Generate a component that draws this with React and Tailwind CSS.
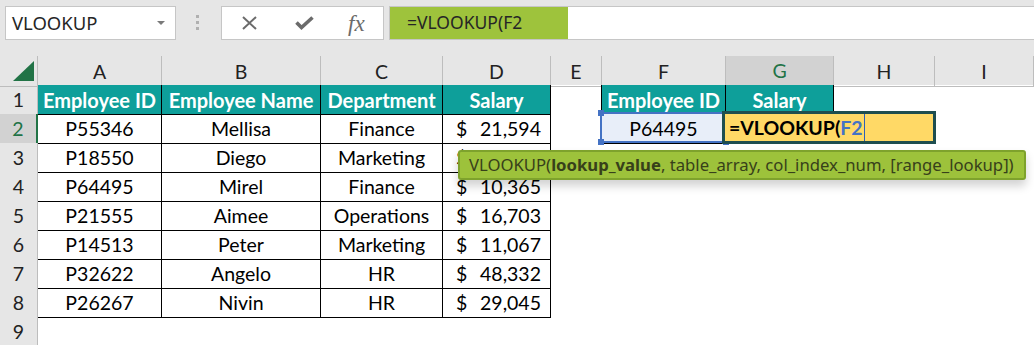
import React from "react";

const COLW = "grid grid-cols-[38px_124px_159px_122px_108px_51px_124px_108px_101px_99px]";
const LETTERS = ["A", "B", "C", "D", "E", "F", "G", "H", "I"];

const DATA = [
  ["P55346", "Mellisa", "Finance", "21,594"],
  ["P18550", "Diego", "Marketing", "34,210"],
  ["P64495", "Mirel", "Finance", "10,365"],
  ["P21555", "Aimee", "Operations", "16,703"],
  ["P14513", "Peter", "Marketing", "11,067"],
  ["P32622", "Angelo", "HR", "48,332"],
  ["P26267", "Nivin", "HR", "29,045"],
];

const inT = (r, c) =>
  (r >= 1 && r <= 8 && c >= 1 && c <= 4) || (r >= 1 && r <= 2 && (c === 6 || c === 7));

const CELL_FONT = { fontFamily: "Lato, 'Liberation Sans', sans-serif" };
const UI_FONT = { fontFamily: "'Noto Sans', 'Open Sans', sans-serif" };

function Cell({ r, c }) {
  const rightBlack = inT(r, c) || inT(r, c + 1);
  const bottomBlack = inT(r, c) || inT(r + 1, c);
  const teal = r === 1 && inT(r, c);
  let content = null;
  if (r === 1) {
    const heads = { 1: "Employee ID", 2: "Employee Name", 3: "Department", 4: "Salary", 6: "Employee ID", 7: "Salary" };
    content = heads[c] || null;
  } else if (r >= 2 && r <= 8 && c >= 1 && c <= 4) {
    const row = DATA[r - 2];
    if (c === 4) {
      return (
        <div
          className={`flex items-center justify-between pl-[13px] pr-[9px] border-r border-b text-[19.5px] text-black ${
            rightBlack ? "border-r-black" : "border-r-transparent"
          } ${bottomBlack ? "border-b-black" : "border-b-transparent"}`}
        >
          <span>$</span>
          <span>{row[3]}</span>
        </div>
      );
    }
    content = row[c - 1];
  } else if (r === 2 && c === 6) {
    content = "P64495";
  }
  const f2 = r === 2 && c === 6;
  return (
    <div
      className={`flex items-center justify-center border-r border-b whitespace-nowrap overflow-hidden ${
        rightBlack ? "border-r-black" : "border-r-transparent"
      } ${bottomBlack ? "border-b-black" : "border-b-transparent"} ${
        teal ? "bg-[#0e9f9a] text-white font-bold text-[20px]" : "text-black text-[19.5px]"
      } ${f2 ? "bg-[#e8eef9]" : ""}`}
    >
      {content}
    </div>
  );
}

export default function App() {
  return (
    <div className="relative w-[1034px] h-[345px] overflow-hidden bg-white" style={CELL_FONT}>
      {/* Toolbar */}
      <div className="h-[56px] bg-[#e6e6e6] flex items-start pt-[6px]">
        <div
          className="ml-[5px] w-[171px] h-[34px] bg-white border border-[#c6c6c6] flex items-center justify-between pl-[6px] pr-[10px]"
          style={UI_FONT}
        >
          <span className="text-[18.5px] text-[#262626] leading-none">VLOOKUP</span>
          <svg width="8" height="5" viewBox="0 0 8 5">
            <path d="M0 0 L8 0 L4 4 Z" fill="#7a7a7a" />
          </svg>
        </div>
        <div className="ml-[20px] mt-[9px] flex flex-col gap-[3px]">
          <div className="w-[3px] h-[3px] bg-[#b0b0b0]" />
          <div className="w-[3px] h-[3px] bg-[#b0b0b0]" />
          <div className="w-[3px] h-[3px] bg-[#b0b0b0]" />
        </div>
        <div className="ml-[22px] w-[163px] h-[34px] bg-white border border-[#c6c6c6] flex items-center">
          <svg className="ml-[19px]" width="17" height="14" viewBox="0 0 17 14">
            <path d="M2 1 L15 13 M15 1 L2 13" stroke="#6b6b6b" strokeWidth="2" />
          </svg>
          <svg className="ml-[37px]" width="19" height="14" viewBox="0 0 19 14">
            <path d="M1.5 6.5 L6.5 11.5 L17.5 1.5" stroke="#6b6b6b" strokeWidth="3.6" fill="none" />
          </svg>
          <span
            className="ml-[34px] text-[23px] italic text-[#6b6b6b] leading-none"
            style={{ fontFamily: "'Liberation Serif', serif" }}
          >
            fx
          </span>
        </div>
        <div className="ml-[5px] flex-1 h-[34px] bg-white border border-[#c6c6c6] border-r-0 flex">
          <div className="w-[178px] h-full bg-[#9ec33c] flex items-center pl-[17px]" style={UI_FONT}>
            <span className="text-[17.5px] text-[#262626] leading-none">=VLOOKUP(F2</span>
          </div>
        </div>
      </div>

      {/* Column headers */}
      <div className={`${COLW} h-[29px] bg-[#e6e6e6]`}>
        <div className="relative border-r border-b border-[#bdbdbd]">
          <svg className="absolute left-[13px] top-[5px]" width="21" height="20" viewBox="0 0 21 20">
            <path d="M21 0 L21 20 L0 20 Z" fill="#217346" />
          </svg>
        </div>
        {LETTERS.map((l) =>
          l === "G" ? (
            <div
              key={l}
              className="flex items-center justify-center bg-[#d2d2d2] border-r border-r-[#bdbdbd] border-b-2 border-b-[#217346] text-[19.5px] text-[#217346]"
            >
              {l}
            </div>
          ) : (
            <div
              key={l}
              className="flex items-center justify-center border-r border-b border-[#bdbdbd] text-[19.5px] text-[#222]"
            >
              {l}
            </div>
          )
        )}
      </div>

      {/* Rows */}
      {[1, 2, 3, 4, 5, 6, 7, 8, 9].map((r) => (
        <div key={r} className={`${COLW} h-[29px]`}>
          {r === 2 ? (
            <div className="flex items-center justify-center bg-[#d2d2d2] border-b border-b-[#bdbdbd] border-r-2 border-r-[#217346] text-[19.5px] text-[#217346]">
              {r}
            </div>
          ) : (
            <div className="flex items-center justify-center bg-[#e6e6e6] border-r border-b border-[#bdbdbd] text-[19.5px] text-[#222]">
              {r}
            </div>
          )}
          {[1, 2, 3, 4, 5, 6, 7, 8, 9].map((c) => (
            <Cell key={c} r={r} c={c} />
          ))}
        </div>
      ))}

      {/* F2 reference highlight */}
      <div className="absolute left-[600px] top-[112px] w-[127px] h-[31px] border-2 border-[#4472c4]">
        <div className="absolute -left-[4px] -top-[4px] w-[6px] h-[6px] bg-[#4472c4]" />
        <div className="absolute -left-[4px] -bottom-[4px] w-[6px] h-[6px] bg-[#4472c4]" />
        <div className="absolute -right-[4px] -bottom-[4px] w-[6px] h-[6px] bg-[#4472c4]" />
      </div>

      {/* Active editing cell */}
      <div className="absolute left-[722px] top-[111px] w-[214px] h-[33px] border-[3px] border-[#1e4e4f] bg-[#ffd966] flex items-center pl-[4px]">
        <span className="text-[19.5px] font-bold text-black leading-none">=VLOOKUP(</span>
        <span className="text-[19.5px] font-bold text-[#4472c4] leading-none">F2</span>
        <div className="ml-[1px] w-[1px] h-[27px] bg-[#2f5fb8]" />
      </div>

      {/* Tooltip */}
      <div
        className="absolute left-[458px] top-[150px] w-[568px] h-[30px] rounded-[3px] bg-[#9dc23b] border-2 border-[#7ea22c] shadow-[0_6px_10px_rgba(0,0,0,0.18)] flex items-center pl-[9px]"
        style={UI_FONT}
      >
        <span className="text-[16.7px] text-[#37401a] whitespace-nowrap leading-none">
          VLOOKUP(<b>lookup_value</b>, table_array, col_index_num, [range_lookup])
        </span>
      </div>
    </div>
  );
}
